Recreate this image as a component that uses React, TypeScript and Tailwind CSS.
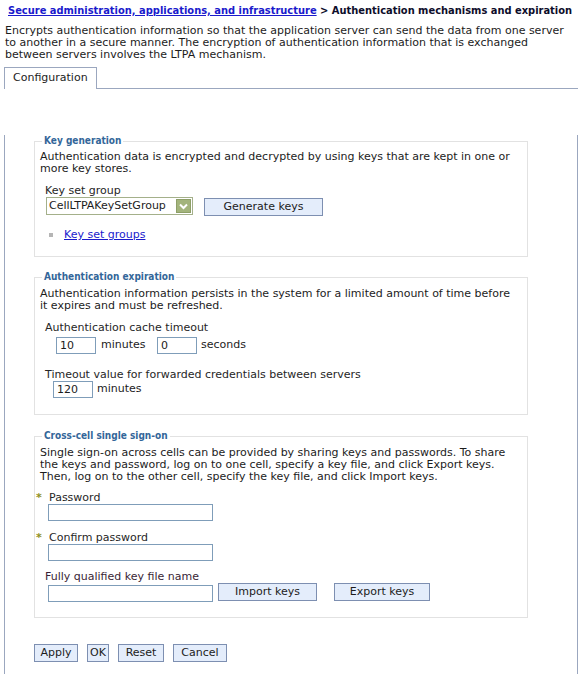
import React from "react";

const BODY = { fontFamily: '"DejaVu Sans", Verdana, sans-serif' } as React.CSSProperties;
const BOLD = {
  fontFamily: '"DejaVu Sans Condensed", "DejaVu Sans", sans-serif',
  fontStretch: "condensed",
} as React.CSSProperties;

function Btn({ w, children, className = "" }: { w: string; children: React.ReactNode; className?: string }) {
  return (
    <div
      className={`${w} ${className} h-[18px] border border-[#7d8fb1] bg-[#e4edfb] text-[#1c1c1c] text-center leading-[16px] whitespace-nowrap`}
    >
      {children}
    </div>
  );
}

function Input({ w, value = "", className = "" }: { w: string; value?: string; className?: string }) {
  return (
    <div className={`${w} ${className} h-[17px] border border-[#7f9db9] bg-white pl-[3px] leading-[15px] text-[#1c1c1c]`}>
      {value}
    </div>
  );
}

function Legend({ children }: { children: React.ReactNode }) {
  return (
    <legend className="ml-[2px] px-[2px] leading-[12px] font-bold text-[10px] text-[#336699]" style={BOLD}>
      {children}
    </legend>
  );
}

function Star() {
  return <span className="text-[#8f8f1e] font-bold text-[11px] leading-[12px] w-[13px] inline-block">*</span>;
}

export default function App() {
  return (
    <div className="w-[578px] h-[674px] bg-white overflow-hidden text-[11px] text-[#1c1c1c]" style={BODY}>
      {/* breadcrumb */}
      <div className="pt-[4px] pl-[8px] h-[18px] leading-[14px] whitespace-nowrap font-bold text-[11px]" style={BOLD}>
        <a className="text-[#1a1acc] underline">Secure administration, applications, and infrastructure</a>
        <span className="text-[#0d0d2a]"> &gt; Authentication mechanisms and expiration</span>
      </div>

      {/* description */}
      <div className="mt-[7px] pl-[5px] leading-[12px] whitespace-nowrap">
        Encrypts authentication information so that the application server can send the data from one server
        <br />
        to another in a secure manner. The encryption of authentication information that is exchanged
        <br />
        between servers involves the LTPA mechanism.
      </div>

      {/* tab row */}
      <div className="mt-[6px] ml-[4px] w-[574px] h-[22px] flex">
        <div className="w-[93px] h-[22px] border-t border-l border-r border-[#9ba7bf] pl-[8px] leading-[20px] bg-white">
          Configuration
        </div>
        <div className="flex-1 border-b border-[#9ba7bf]" />
      </div>

      {/* panel */}
      <div className="ml-[4px] w-[574px] h-[585px] border-l border-r border-[#9ba7bf] pl-[29px]">
        {/* Key generation */}
        <fieldset className="mt-[46px] w-[494px] border border-[#e2e2e2] pl-[5px] pb-[15px]">
          <Legend>Key generation</Legend>
          <div className="mt-[4px] leading-[12px] whitespace-nowrap">
            Authentication data is encrypted and decrypted by using keys that are kept in one or
            <br />
            more key stores.
          </div>
          <div className="mt-[10px] pl-[5px] leading-[12px] text-[#262626]">Key set group</div>
          <div className="flex items-start">
            <div className="ml-[6px] w-[147px] h-[18px] border border-[#a4b08a] bg-white flex items-center justify-between pl-[2px] pr-[1px]">
              <span className="leading-[16px] whitespace-nowrap">CellLTPAKeySetGroup</span>
              <div className="w-[15px] h-[14px] bg-[#a3b47c] border border-[#8e9f68] flex items-center justify-center">
                <svg width="9" height="7" viewBox="0 0 9 7">
                  <path d="M1 1.5 L4.5 5 L8 1.5" stroke="#ffffff" strokeWidth="2" fill="none" />
                </svg>
              </div>
            </div>
            <Btn w="w-[119px]" className="ml-[11px] mt-[1px]">
              Generate keys
            </Btn>
          </div>
          <div className="mt-[13px] flex items-center leading-[12px]">
            <div className="ml-[9px] w-[4px] h-[4px] bg-[#b5b5b5]" />
            <a className="ml-[11px] text-[#1a1acc] underline">Key set groups</a>
          </div>
        </fieldset>

        {/* Authentication expiration */}
        <fieldset className="mt-[14px] w-[494px] border border-[#e2e2e2] pl-[5px] pb-[16px]">
          <Legend>Authentication expiration</Legend>
          <div className="mt-[5px] leading-[12px] whitespace-nowrap">
            Authentication information persists in the system for a limited amount of time before
            <br />
            it expires and must be refreshed.
          </div>
          <div className="mt-[10px] pl-[5px] leading-[12px] text-[#262626]">Authentication cache timeout</div>
          <div className="mt-[3px] flex items-center">
            <Input w="w-[40px]" className="ml-[16px]" value="10" />
            <span className="ml-[5px] w-[56px]">minutes</span>
            <Input w="w-[40px]" value="0" />
            <span className="ml-[4px]">seconds</span>
          </div>
          <div className="mt-[15px] pl-[5px] leading-[12px] text-[#262626]">
            Timeout value for forwarded credentials between servers
          </div>
          <div className="flex items-center">
            <Input w="w-[40px]" className="ml-[13px]" value="120" />
            <span className="ml-[4px]">minutes</span>
          </div>
        </fieldset>

        {/* Cross-cell single sign-on */}
        <fieldset className="mt-[15px] w-[494px] border border-[#e2e2e2] pl-[5px] pb-[15px]">
          <Legend>Cross-cell single sign-on</Legend>
          <div className="mt-[5px] leading-[12px] whitespace-nowrap">
            Single sign-on across cells can be provided by sharing keys and passwords. To share
            <br />
            the keys and password, log on to one cell, specify a key file, and click Export keys.
            <br />
            Then, log on to the other cell, specify the key file, and click Import keys.
          </div>
          <div className="mt-[9px] ml-[-4px] h-[12px] leading-[12px] flex items-center text-[#262626]">
            <Star />
            <span>Password</span>
          </div>
          <Input w="w-[165px]" className="ml-[8px]" />
          <div className="mt-[11px] ml-[-4px] h-[12px] leading-[12px] flex items-center text-[#262626]">
            <Star />
            <span>Confirm password</span>
          </div>
          <Input w="w-[165px]" className="ml-[8px]" />
          <div className="mt-[10px] pl-[5px] h-[12px] leading-[12px] text-[#3a1f36]">Fully qualified key file name</div>
          <div className="flex items-start">
            <Input w="w-[165px]" className="ml-[8px] mt-[2px]" />
            <Btn w="w-[99px]" className="ml-[5px]">
              Import keys
            </Btn>
            <Btn w="w-[96px]" className="ml-[17px]">
              Export keys
            </Btn>
          </div>
        </fieldset>

        {/* bottom buttons */}
        <div className="mt-[26px] flex gap-[9px]">
          <Btn w="w-[44px]">Apply</Btn>
          <Btn w="w-[22px]">OK</Btn>
          <Btn w="w-[46px]">Reset</Btn>
          <Btn w="w-[54px]">Cancel</Btn>
        </div>
      </div>
    </div>
  );
}
